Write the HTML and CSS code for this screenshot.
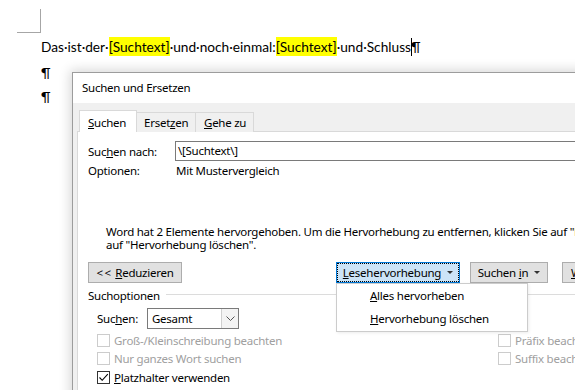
FILE: index.html
```html
<!DOCTYPE html>
<html lang="de">
<head>
<meta charset="utf-8">
<title>Suchen und Ersetzen</title>
<link rel="stylesheet" href="styles.css">
</head>
<body>
<div class="page">
  <div class="corner"></div>
  <p class="para first">Das·ist·der·<span class="hl">[Suchtext]</span>·und·noch·einmal:<span class="hl">[Suchtext]</span>·und·Schluss<span class="caret"></span>¶</p>
  <p class="para">¶</p>
  <p class="para">¶</p>
</div>

<div class="dialog">
  <div class="titlebar">Suchen und Ersetzen</div>
  <div class="client">
    <div class="tabs">
      <div class="tab active t1"><u>S</u>uchen</div>
      <div class="tab t2">Erset<u>z</u>en</div>
      <div class="tab t3"><u>G</u>ehe zu</div>
    </div>
    <div class="tabpage">
      <div class="field-row">
        <span class="label">Suc<u>h</u>en nach:</span>
        <div class="input">\[Suchtext\]</div>
      </div>
      <div class="opt-row"><span class="label lab2">Optionen:</span><span>Mit Mustervergleich</span></div>
      <p class="message">Word hat 2 Elemente hervorgehoben. Um die Hervorhebung zu entfernen, klicken Sie auf "Lesehervorhebung" und dann<br>auf "Hervorhebung löschen".</p>
      <div class="buttons">
        <div class="btn b-red"><span><span class="lt">&lt;&lt;</span> <u>R</u>eduzieren</span></div>
        <div class="menu-wrap">
          <div class="btn b-lese focus"><span><u>L</u>esehervorhebung</span><span class="tri"></span></div>
          <div class="menu">
            <div class="item"><u>A</u>lles hervorheben</div>
            <div class="item"><u>H</u>ervorhebung löschen</div>
          </div>
        </div>
        <div class="btn b-in"><span>Suchen <u>i</u>n</span><span class="tri"></span></div>
        <div class="btn b-wei"><span><u>W</u>eitersuchen</span></div>
      </div>
      <div class="legend"><span>Suchoptionen</span><span class="gline"></span></div>
      <div class="grp">
        <div class="search-row">
          <span class="slabel">Suc<u>h</u>en:</span>
          <div class="combo"><span class="cval">Gesamt</span><span class="carrow"><svg width="9" height="5" viewBox="0 0 9 5"><polyline points="0.5,0.5 4.5,4.5 8.5,0.5" fill="none" stroke="#555" stroke-width="1"/></svg></span></div>
        </div>
        <div class="checks">
          <div class="check dis"><span class="box"></span><span>Groß-/Kleinschreibung beachten</span></div>
          <div class="check dis"><span class="box"></span><span>Präfix beachten</span></div>
          <div class="check dis"><span class="box"></span><span>Nur ganzes Wort suchen</span></div>
          <div class="check dis"><span class="box"></span><span>Suffix beachten</span></div>
          <div class="check"><span class="box on"><svg width="11" height="11" viewBox="0 0 11 11"><polyline points="1.5,5.5 4.2,8.3 9.8,2.2" fill="none" stroke="#000" stroke-width="1.1"/></svg></span><span><u>P</u>latzhalter verwenden</span></div>
        </div>
      </div>
    </div>
  </div>
</div>
</body>
</html>
```
FILE: styles.css
```css
html, body {
  margin: 0;
  padding: 0;
}
body {
  width: 575px;
  height: 390px;
  overflow: hidden;
  position: relative;
  background: #fff;
}
.page {
  padding-top: 9px;
  font-family: Lato, "Open Sans", sans-serif;
  font-size: 13.7px;
  color: #000;
}
.corner {
  margin-left: 17px;
  width: 23px;
  height: 23px;
  border-right: 1px solid #a6a6a6;
  border-bottom: 1px solid #a6a6a6;
}
.para {
  margin: 0 0 7.5px 41px;
  line-height: 17px;
  white-space: nowrap;
}
.para.first {
  margin-top: 5px;
}
.hl {
  background: #ffff00;
  padding: 1px 0;
}
.caret {
  display: inline-block;
  width: 1px;
  height: 18px;
  background: #000;
  vertical-align: -4px;
  margin-right: -1px;
}

/* dialog */
.dialog {
  position: absolute;
  left: 72px;
  top: 72px;
  width: 540px;
  height: 340px;
  border: 1px solid #9c9c9c;
  background: #f0f0f0;
  box-shadow: 0 0 11px 2px rgba(0, 0, 0, 0.16);
  font-family: "Noto Sans", "Open Sans", sans-serif;
  font-size: 11.5px;
  letter-spacing: -0.25px;
  color: #000;
}
.titlebar {
  background: #fff;
  height: 30px;
  line-height: 30px;
  padding-left: 9px;
}
.client {
  padding: 7px 0 0 4px;
}
.tabs {
  display: flex;
  align-items: flex-end;
  height: 22px;
  margin-left: 2px;
}
.tab {
  box-sizing: border-box;
  flex: none;
  border: 1px solid #d9d9d9;
  border-bottom: none;
  background: #f0f0f0;
  height: 20px;
  line-height: 16px;
  padding: 2px 0 0 7px;
  margin-left: -1px;
  white-space: nowrap;
}
.tab.active {
  position: relative;
  z-index: 1;
  background: #fff;
  height: 22px;
  padding: 4px 0 0 8px;
  margin-left: 0;
}
.t1 { width: 58px; }
.t2 { width: 60px; }
.t3 { width: 59px; padding-left: 8px; }
.tabpage {
  background: #fff;
  border: 1px solid #d9d9d9;
  margin-top: -1px;
  height: 300px;
  padding-left: 10px;
}
.field-row {
  display: flex;
  align-items: center;
  margin-top: 9px;
  height: 20px;
}
.label {
  width: 87px;
  flex: none;
}
.lab2 { width: 88px; }
.input {
  flex: 1;
  box-sizing: border-box;
  height: 20px;
  line-height: 18px;
  border: 1px solid #7a7a7a;
  padding-left: 2px;
}
.opt-row {
  display: flex;
  align-items: center;
  height: 18px;
}
.message {
  margin: 46px 0 0 18px;
  line-height: 13px;
  white-space: nowrap;
}
.buttons {
  display: flex;
  margin-top: 11px;
  height: 21px;
}
.btn {
  box-sizing: border-box;
  flex: none;
  height: 21px;
  line-height: 19px;
  border: 1px solid #adadad;
  background: #e1e1e1;
  display: flex;
  justify-content: center;
  align-items: center;
  white-space: nowrap;
}
.lt {
  letter-spacing: 1.5px;
}
.b-red { width: 94px; }
.menu-wrap {
  position: relative;
  flex: none;
  margin-left: 154px;
}
.b-lese {
  width: 124px;
  background: #cce4f7;
  border-color: #0078d7;
  outline: 1px dotted #000;
  outline-offset: -2px;
}
.b-in {
  width: 78px;
  margin-left: 10px;
}
.b-wei {
  width: 80px;
  margin-left: 14px;
  justify-content: flex-start;
  padding-left: 8px;
}
.tri {
  display: inline-block;
  width: 0;
  height: 0;
  border-left: 3px solid transparent;
  border-right: 3px solid transparent;
  border-top: 3px solid #333;
  margin-left: 6px;
}
.menu {
  position: absolute;
  z-index: 5;
  left: 0;
  top: 100%;
  width: 192px;
  box-sizing: border-box;
  padding-top: 1px;
  background: #fff;
  border: 1px solid #cccccc;
  box-shadow: 1px 1px 3px rgba(0, 0, 0, 0.08);
}
.item {
  height: 23px;
  line-height: 22px;
  padding-left: 33px;
  white-space: nowrap;
}
.legend {
  display: flex;
  align-items: center;
  margin-top: 5px;
  height: 14px;
}
.gline {
  flex: 1;
  border-top: 1px solid #dcdcdc;
  margin-left: 6px;
  margin-top: -2px;
}
.grp {
  padding-left: 9px;
}
.search-row {
  display: flex;
  align-items: center;
  margin-top: 6px;
  height: 21px;
}
.slabel {
  width: 50px;
  flex: none;
}
.combo {
  box-sizing: border-box;
  width: 92px;
  height: 21px;
  border: 1px solid #7a7a7a;
  display: flex;
  background: #fff;
}
.cval {
  flex: 1;
  line-height: 19px;
  padding-left: 4px;
}
.carrow {
  width: 16px;
  border-left: 1px solid #cfcfcf;
  background: #f3f3f3;
  display: flex;
  align-items: center;
  justify-content: center;
}
.checks {
  display: grid;
  grid-template-columns: 401px auto;
  grid-auto-rows: 18.5px;
  margin-top: 2px;
}
.check {
  display: flex;
  align-items: center;
  white-space: nowrap;
}
.box {
  box-sizing: border-box;
  width: 13px;
  height: 13px;
  border: 1px solid #333;
  background: #fff;
  margin-right: 4px;
  flex: none;
  display: flex;
  align-items: center;
  justify-content: center;
}
.check.dis {
  color: #a0a0a0;
}
.check.dis .box {
  border-color: #cccccc;
}
u {
  text-underline-offset: 1px;
}
```
